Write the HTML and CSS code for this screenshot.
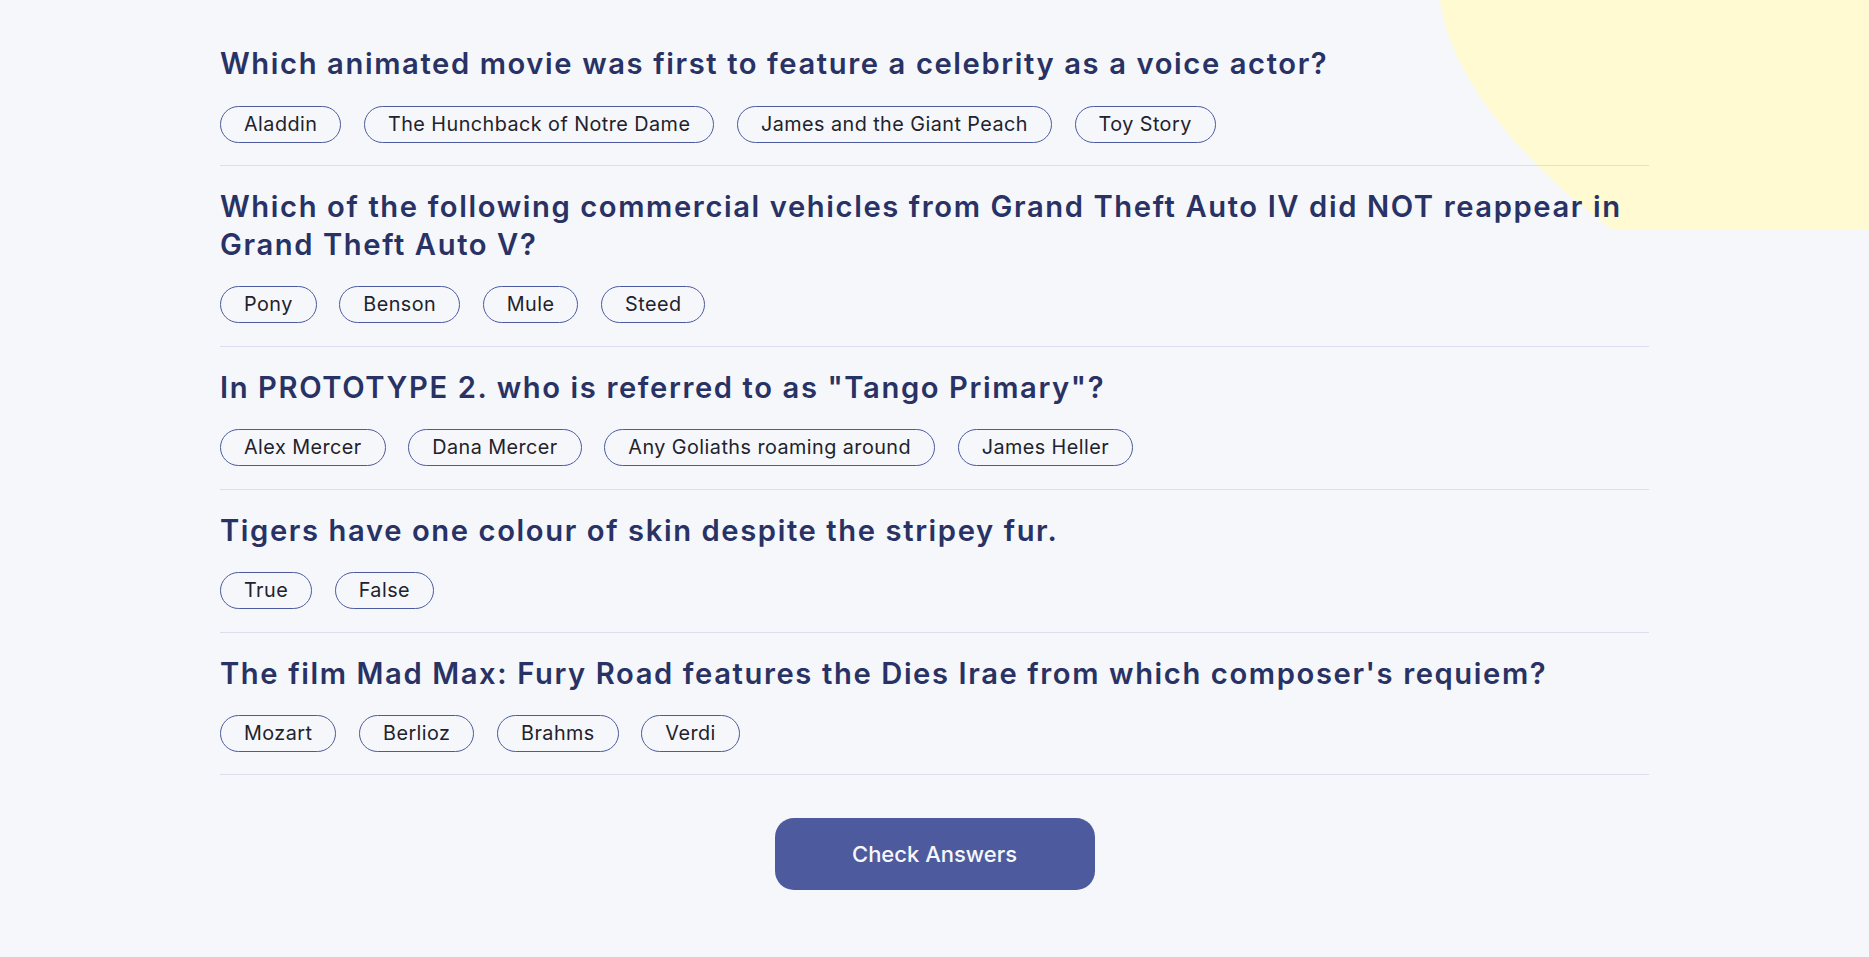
FILE: index.html
```html
<!DOCTYPE html>
<html lang="en">
<head>
<meta charset="utf-8">
<title>Quizzical</title>
<link rel="stylesheet" href="styles.css">
</head>
<body>
<svg class="blob" viewBox="0 0 429 230" width="429" height="230" aria-hidden="true">
  <path d="M0 0 C10 80 90 170 173 230 L429 230 L429 0 Z" fill="#fffad1"/>
</svg>
<main class="quiz">
  <section class="question">
    <h2 class="question-title">Which animated movie was first to feature a celebrity as a voice actor?</h2>
    <div class="answers">
      <button class="answer">Aladdin</button>
      <button class="answer">The Hunchback of Notre Dame</button>
      <button class="answer">James and the Giant Peach</button>
      <button class="answer">Toy Story</button>
    </div>
  </section>
  <section class="question">
    <h2 class="question-title">Which of the following commercial vehicles from Grand Theft Auto IV did NOT reappear in Grand Theft Auto V?</h2>
    <div class="answers">
      <button class="answer">Pony</button>
      <button class="answer">Benson</button>
      <button class="answer">Mule</button>
      <button class="answer">Steed</button>
    </div>
  </section>
  <section class="question">
    <h2 class="question-title">In PROTOTYPE 2. who is referred to as "Tango Primary"?</h2>
    <div class="answers">
      <button class="answer">Alex Mercer</button>
      <button class="answer">Dana Mercer</button>
      <button class="answer">Any Goliaths roaming around</button>
      <button class="answer">James Heller</button>
    </div>
  </section>
  <section class="question">
    <h2 class="question-title">Tigers have one colour of skin despite the stripey fur.</h2>
    <div class="answers">
      <button class="answer">True</button>
      <button class="answer">False</button>
    </div>
  </section>
  <section class="question">
    <h2 class="question-title">The film Mad Max: Fury Road features the Dies Irae from which composer's requiem?</h2>
    <div class="answers">
      <button class="answer">Mozart</button>
      <button class="answer">Berlioz</button>
      <button class="answer">Brahms</button>
      <button class="answer">Verdi</button>
    </div>
  </section>
  <div class="actions">
    <button class="check-btn">Check Answers</button>
  </div>
</main>
</body>
</html>
```
FILE: styles.css
```css
* {
  box-sizing: border-box;
}

html, body {
  margin: 0;
  padding: 0;
}

body {
  background: #f5f7fb;
  font-family: Inter, "Noto Sans", sans-serif;
  color: #293264;
  min-height: 957px;
  position: relative;
  overflow: hidden;
}

.blob {
  position: absolute;
  top: 0;
  right: 0;
  display: block;
}

.quiz {
  position: relative;
  width: 1429px;
  margin: 0 auto;
  padding-top: 23px;
  display: flex;
  flex-direction: column;
}

.question {
  padding: 22.3px 0;
  border-bottom: 1px solid #dbdef0;
  display: flex;
  flex-direction: column;
  gap: 22.3px;
}

.question-title {
  margin: 0;
  font-family: Inter, sans-serif;
  font-weight: 600;
  font-size: 29.2px;
  line-height: 38px;
  letter-spacing: 1.6px;
  color: #293264;
}

.answers {
  display: flex;
  flex-wrap: wrap;
  gap: 22.6px;
}

.answer {
  font-family: Inter, sans-serif;
  font-size: 19.8px;
  font-weight: 400;
  letter-spacing: 0.45px;
  line-height: 23px;
  height: 37px;
  padding: 6px 23px;
  border: 1px solid #4d5b9e;
  border-radius: 19px;
  background: transparent;
  color: #22222c;
  cursor: pointer;
}

.actions {
  display: flex;
  justify-content: center;
  padding-top: 43px;
}

.check-btn {
  width: 320px;
  height: 71.5px;
  border: none;
  border-radius: 19px;
  background: #4d5b9e;
  color: #f5f7fb;
  font-family: Inter, sans-serif;
  font-size: 22px;
  font-weight: 500;
  cursor: pointer;
}
```
